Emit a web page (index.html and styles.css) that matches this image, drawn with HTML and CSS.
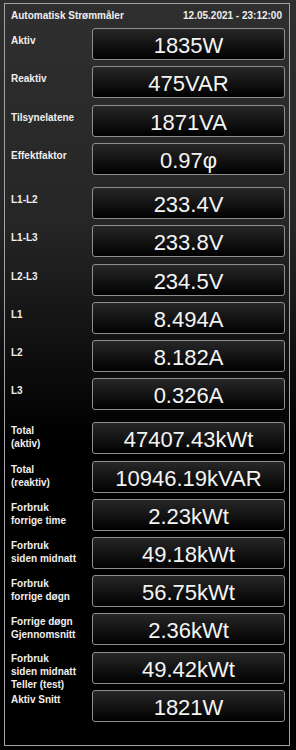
FILE: index.html
```html
<!DOCTYPE html>
<html lang="no">
<head>
<meta charset="utf-8">
<title>Automatisk Strømmåler</title>
<link rel="stylesheet" href="styles.css">
</head>
<body>
<div class="frame">
  <div class="header">
    <span class="title">Automatisk Strømmåler</span>
    <span class="date">12.05.2021 - 23:12:00</span>
  </div>
  <div class="group">
    <div class="row"><div class="label">Aktiv</div><div class="value">1835W</div></div>
    <div class="row"><div class="label">Reaktiv</div><div class="value">475VAR</div></div>
    <div class="row"><div class="label">Tilsynelatene</div><div class="value">1871VA</div></div>
    <div class="row"><div class="label">Effektfaktor</div><div class="value">0.97φ</div></div>
  </div>
  <div class="group">
    <div class="row"><div class="label">L1-L2</div><div class="value">233.4V</div></div>
    <div class="row"><div class="label">L1-L3</div><div class="value">233.8V</div></div>
    <div class="row"><div class="label">L2-L3</div><div class="value">234.5V</div></div>
    <div class="row"><div class="label">L1</div><div class="value">8.494A</div></div>
    <div class="row"><div class="label">L2</div><div class="value">8.182A</div></div>
    <div class="row"><div class="label">L3</div><div class="value">0.326A</div></div>
  </div>
  <div class="group">
    <div class="row"><div class="label label-2">Total<br>(aktiv)</div><div class="value">47407.43kWt</div></div>
    <div class="row"><div class="label label-2">Total<br>(reaktiv)</div><div class="value">10946.19kVAR</div></div>
    <div class="row"><div class="label label-2">Forbruk<br>forrige time</div><div class="value">2.23kWt</div></div>
    <div class="row"><div class="label label-2">Forbruk<br>siden midnatt</div><div class="value">49.18kWt</div></div>
    <div class="row"><div class="label label-2">Forbruk<br>forrige døgn</div><div class="value">56.75kWt</div></div>
    <div class="row"><div class="label label-2">Forrige døgn<br>Gjennomsnitt</div><div class="value">2.36kWt</div></div>
    <div class="row"><div class="label label-3">Forbruk<br>siden midnatt<br>Teller (test)</div><div class="value">49.42kWt</div></div>
    <div class="row"><div class="label label-last">Aktiv Snitt</div><div class="value">1821W</div></div>
  </div>
</div>
</body>
</html>
```
FILE: styles.css
```css
html, body {
  margin: 0;
  padding: 0;
}
body {
  width: 296px;
  height: 750px;
  background: linear-gradient(to bottom, #2f2f2f 0px, #262626 220px, #000 440px, #000 750px);
  font-family: "Liberation Sans", Arial, sans-serif;
  color: #efefef;
  overflow: hidden;
}
.frame {
  box-sizing: border-box;
  margin: 3px 0 0 4px;
  width: 286px;
  height: 743px;
  border: 1px solid #a3a3a3;
  padding: 5px 4px 0 6px;
  display: flex;
  flex-direction: column;
  gap: 6.2px;
}
.header {
  display: flex;
  justify-content: space-between;
  font-size: 10px;
  font-weight: bold;
  line-height: 13px;
  padding-right: 3px;
  margin-bottom: 0;
}
.group {
  display: flex;
  flex-direction: column;
  gap: 6.2px;
}
.group + .group {
  margin-top: 6.2px;
}
.row {
  display: flex;
  height: 32px;
  align-items: flex-start;
}
.label {
  width: 81px;
  flex: none;
  font-size: 10px;
  font-weight: bold;
  line-height: 13px;
  padding-top: 6px;
  white-space: nowrap;
}
.label-2 {
  padding-top: 2px;
}
.label-3 {
  padding-top: 0;
}
.label-last {
  padding-top: 3px;
}
.value {
  box-sizing: border-box;
  width: 193px;
  height: 32px;
  flex: none;
  border: 1px solid #8e8e8e;
  border-radius: 3px;
  background: linear-gradient(to bottom, #272727 0%, #0a0a0a 75%, #000 100%);
  color: #f4f4f4;
  font-size: 22px;
  line-height: 30px;
  padding-top: 2px;
  text-align: center;
  overflow: hidden;
}
```
